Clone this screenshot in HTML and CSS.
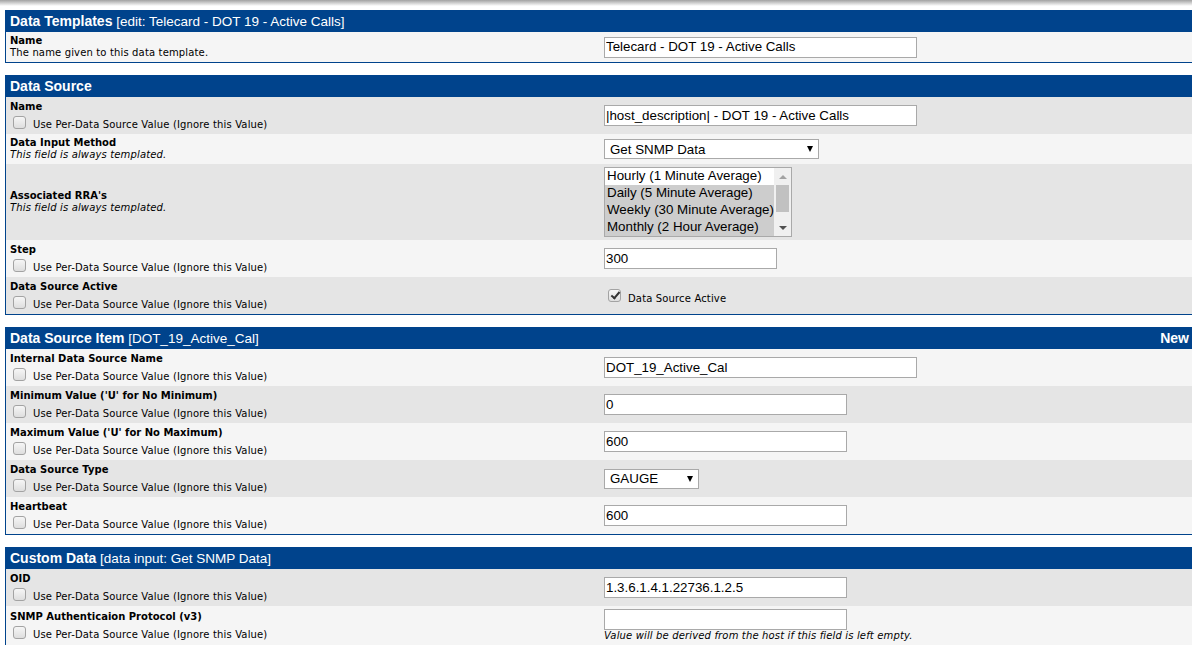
FILE: index.html
```html
<!DOCTYPE html>
<html>

<head>
    <meta charset="utf-8">
    <title>Data Templates</title>
    <link rel="stylesheet" href="styles.css">
</head>

<body>
    <div class="top-shade"></div>
    <div class="page">

        <!-- Data Templates -->
        <div class="box">
            <div class="box-header">
                <span><b>Data Templates</b> [edit: Telecard - DOT 19 - Active Calls]</span>
            </div>
            <div class="row odd short">
                <div class="label">
                    <div class="title">Name</div>
                    <div class="desc">The name given to this data template.</div>
                </div>
                <div class="field"><input class="text long" type="text" value="Telecard - DOT 19 - Active Calls"></div>
            </div>
        </div>

        <!-- Data Source -->
        <div class="box">
            <div class="box-header">
                <span><b>Data Source</b></span>
            </div>
            <div class="row even">
                <div class="label">
                    <div class="title">Name</div>
                    <label class="check-line"><input type="checkbox"><span>Use Per-Data Source Value (Ignore this Value)</span></label>
                </div>
                <div class="field"><input class="text long" type="text" value="|host_description| - DOT 19 - Active Calls"></div>
            </div>
            <div class="row odd short">
                <div class="label">
                    <div class="title">Data Input Method</div>
                    <div class="desc italic">This field is always templated.</div>
                </div>
                <div class="field">
                    <span class="select-wrap"><select class="select wide">
                        <option>Get SNMP Data</option>
                    </select></span>
                </div>
            </div>
            <div class="row even rra">
                <div class="label">
                    <div class="title">Associated RRA's</div>
                    <div class="desc italic">This field is always templated.</div>
                </div>
                <div class="field">
                    <div class="listbox">
                        <div class="options">
                            <div class="opt">Hourly (1 Minute Average)</div>
                            <div class="opt sel">Daily (5 Minute Average)</div>
                            <div class="opt sel">Weekly (30 Minute Average)</div>
                            <div class="opt sel">Monthly (2 Hour Average)</div>
                        </div>
                        <div class="scrollbar">
                            <div class="arrow-up"></div>
                            <div class="track"><div class="thumb"></div></div>
                            <div class="arrow-down"></div>
                        </div>
                    </div>
                </div>
            </div>
            <div class="row odd">
                <div class="label">
                    <div class="title">Step</div>
                    <label class="check-line"><input type="checkbox"><span>Use Per-Data Source Value (Ignore this Value)</span></label>
                </div>
                <div class="field"><input class="text small" type="text" value="300"></div>
            </div>
            <div class="row even">
                <div class="label">
                    <div class="title">Data Source Active</div>
                    <label class="check-line"><input type="checkbox"><span>Use Per-Data Source Value (Ignore this Value)</span></label>
                </div>
                <div class="field">
                    <label class="field-check"><input type="checkbox" checked><span>Data Source Active</span></label>
                </div>
            </div>
        </div>

        <!-- Data Source Item -->
        <div class="box">
            <div class="box-header">
                <span><b>Data Source Item</b> [DOT_19_Active_Cal]</span>
                <b>New</b>
            </div>
            <div class="row odd">
                <div class="label">
                    <div class="title">Internal Data Source Name</div>
                    <label class="check-line"><input type="checkbox"><span>Use Per-Data Source Value (Ignore this Value)</span></label>
                </div>
                <div class="field"><input class="text long" type="text" value="DOT_19_Active_Cal"></div>
            </div>
            <div class="row even">
                <div class="label">
                    <div class="title">Minimum Value ('U' for No Minimum)</div>
                    <label class="check-line"><input type="checkbox"><span>Use Per-Data Source Value (Ignore this Value)</span></label>
                </div>
                <div class="field"><input class="text medium" type="text" value="0"></div>
            </div>
            <div class="row odd">
                <div class="label">
                    <div class="title">Maximum Value ('U' for No Maximum)</div>
                    <label class="check-line"><input type="checkbox"><span>Use Per-Data Source Value (Ignore this Value)</span></label>
                </div>
                <div class="field"><input class="text medium" type="text" value="600"></div>
            </div>
            <div class="row even">
                <div class="label">
                    <div class="title">Data Source Type</div>
                    <label class="check-line"><input type="checkbox"><span>Use Per-Data Source Value (Ignore this Value)</span></label>
                </div>
                <div class="field">
                    <span class="select-wrap"><select class="select narrow">
                        <option>GAUGE</option>
                    </select></span>
                </div>
            </div>
            <div class="row odd">
                <div class="label">
                    <div class="title">Heartbeat</div>
                    <label class="check-line"><input type="checkbox"><span>Use Per-Data Source Value (Ignore this Value)</span></label>
                </div>
                <div class="field"><input class="text medium" type="text" value="600"></div>
            </div>
        </div>

        <!-- Custom Data -->
        <div class="box">
            <div class="box-header">
                <span><b>Custom Data</b> [data input: Get SNMP Data]</span>
            </div>
            <div class="row even">
                <div class="label">
                    <div class="title">OID</div>
                    <label class="check-line"><input type="checkbox"><span>Use Per-Data Source Value (Ignore this Value)</span></label>
                </div>
                <div class="field"><input class="text medium" type="text" value="1.3.6.1.4.1.22736.1.2.5"></div>
            </div>
            <div class="row odd">
                <div class="label">
                    <div class="title">SNMP Authenticaion Protocol (v3)</div>
                    <label class="check-line"><input type="checkbox"><span>Use Per-Data Source Value (Ignore this Value)</span></label>
                </div>
                <div class="field stacked">
                    <input class="text medium" type="text" value="">
                    <div class="desc italic">Value will be derived from the host if this field is left empty.</div>
                </div>
            </div>
        </div>

    </div>
</body>

</html>
```

FILE: styles.css
```css
* {
    box-sizing: border-box;
    margin: 0;
    padding: 0;
}

html,
body {
    overflow: hidden;
}

body {
    background-color: #fff;
    color: #000;
    font-family: "DejaVu Sans", Verdana, sans-serif;
    font-size: 10px;
    letter-spacing: 0.15px;
    line-height: 12px;
}

.top-shade {
    background: linear-gradient(#a2a2a2, #ffffff);
    height: 6px;
}

.page {
    padding: 4px 0 0 5px;
}

/* boxes */
.box {
    border: 1px solid #00438c;
    margin: 0 -4px 12px 0;
}

.box-header {
    background-color: #00438c;
    color: #fff;
    display: flex;
    font-family: "Liberation Sans", Arial, sans-serif;
    font-size: 13.5px;
    height: 21px;
    justify-content: space-between;
    letter-spacing: 0;
    line-height: 21px;
    padding: 0 6px 0 4px;
}

.box-header b {
    font-size: 14px;
}

/* rows */
.row {
    align-items: center;
    display: grid;
    grid-template-columns: 594px 1fr;
    min-height: 37px;
}

.row.short {
    min-height: 30px;
}

.row.rra {
    min-height: 76px;
}

.odd {
    background-color: #f5f5f5;
}

.even {
    background-color: #e5e5e5;
}

.label {
    padding: 4px 4px 3px 4px;
}

.short .label,
.rra .label {
    padding: 3px 4px;
}

.title {
    font-weight: bold;
    letter-spacing: 0;
}

.italic {
    font-style: italic;
}

.check-line {
    display: flex;
    height: 18px;
}

.check-line input {
    margin: 3px 7px 0 3px;
}

.check-line span {
    padding-top: 6px;
}

/* fields */
.field {
    display: flex;
    align-items: center;
    padding: 3px 4px;
}

.field.stacked {
    align-items: flex-start;
    flex-direction: column;
}

.text {
    background-color: #fff;
    border: 1px solid #a9a9a9;
    color: #000;
    font-family: "Liberation Sans", Arial, sans-serif;
    font-size: 13.333px;
    height: 21px;
    letter-spacing: 0;
    outline: none;
    padding: 0 1px 1px;
}

.text.long {
    width: 313px;
}

.text.medium {
    width: 243px;
}

.text.small {
    width: 173px;
}

input[type="checkbox"] {
    appearance: none;
    -webkit-appearance: none;
    background: linear-gradient(#f6f6f6, #dedede);
    border: 1px solid #a3a3a3;
    border-radius: 3px;
    flex: none;
    height: 13px;
    position: relative;
    width: 13px;
}

input[type="checkbox"]:checked::after {
    border: solid #333;
    border-width: 0 2px 2px 0;
    content: "";
    height: 7px;
    left: 4px;
    position: absolute;
    top: 0;
    transform: rotate(40deg);
    width: 3px;
}

.field-check {
    align-items: center;
    display: flex;
}

.field-check input {
    margin: 0 7px 0 4px;
}

.field-check span {
    padding-top: 6px;
}

.select-wrap {
    display: inline-block;
    position: relative;
}

.select-wrap::after {
    border-left: 3.5px solid transparent;
    border-right: 3.5px solid transparent;
    border-top: 6px solid #000;
    content: "";
    margin-top: -3px;
    pointer-events: none;
    position: absolute;
    right: 6px;
    top: 50%;
}

.select {
    appearance: none;
    -webkit-appearance: none;
    background-color: #fff;
    border: 1px solid #a9a9a9;
    border-radius: 0;
    color: #000;
    display: block;
    font-family: "Liberation Sans", Arial, sans-serif;
    font-size: 13.333px;
    height: 20px;
    letter-spacing: 0;
    outline: none;
    padding: 0 0 0 5px;
}

.select.wide {
    width: 215px;
}

.select.narrow {
    width: 95px;
}

/* multi select list */
.listbox {
    background-color: #fff;
    border: 1px solid #a9a9a9;
    display: flex;
    font-family: "Liberation Sans", Arial, sans-serif;
    font-size: 13.333px;
    height: 70px;
    letter-spacing: 0;
    width: 188px;
}

.options {
    flex: 1;
}

.opt {
    height: 17px;
    line-height: 16px;
    padding-left: 2px;
    white-space: nowrap;
}

.opt.sel {
    background-color: #cdcdcd;
}

.scrollbar {
    background-color: #f0f0f0;
    display: flex;
    flex-direction: column;
    width: 17px;
}

.arrow-up,
.arrow-down {
    align-items: center;
    display: flex;
    height: 17px;
    justify-content: center;
}

.arrow-up::before {
    border-bottom: 4px solid #a3a3a3;
    border-left: 4px solid transparent;
    border-right: 4px solid transparent;
    content: "";
}

.arrow-down::before {
    border-left: 4px solid transparent;
    border-right: 4px solid transparent;
    border-top: 4px solid #505050;
    content: "";
}

.track {
    flex: 1;
    padding: 0 2px;
}

.thumb {
    background-color: #c1c1c1;
    height: 27px;
}
```
